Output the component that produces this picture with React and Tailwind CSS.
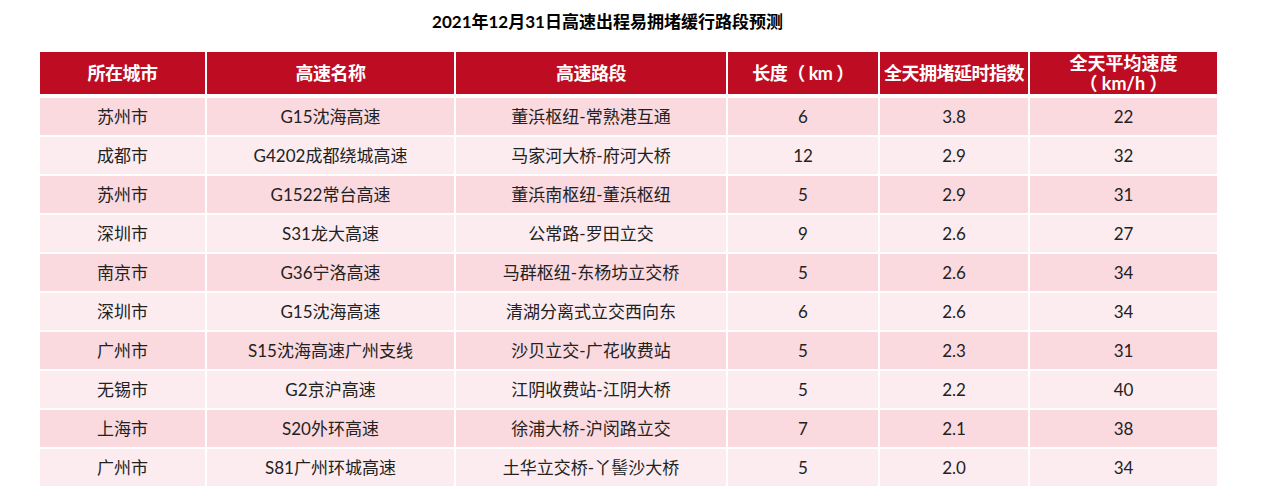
import React from 'react';

const rows = [
  ['苏州市', 'G15沈海高速', '董浜枢纽-常熟港互通', '6', '3.8', '22'],
  ['成都市', 'G4202成都绕城高速', '马家河大桥-府河大桥', '12', '2.9', '32'],
  ['苏州市', 'G1522常台高速', '董浜南枢纽-董浜枢纽', '5', '2.9', '31'],
  ['深圳市', 'S31龙大高速', '公常路-罗田立交', '9', '2.6', '27'],
  ['南京市', 'G36宁洛高速', '马群枢纽-东杨坊立交桥', '5', '2.6', '34'],
  ['深圳市', 'G15沈海高速', '清湖分离式立交西向东', '6', '2.6', '34'],
  ['广州市', 'S15沈海高速广州支线', '沙贝立交-广花收费站', '5', '2.3', '31'],
  ['无锡市', 'G2京沪高速', '江阴收费站-江阴大桥', '5', '2.2', '40'],
  ['上海市', 'S20外环高速', '徐浦大桥-沪闵路立交', '7', '2.1', '38'],
  ['广州市', 'S81广州环城高速', '土华立交桥-丫髻沙大桥', '5', '2.0', '34'],
];

const font = { fontFamily: 'Lato, "Noto Sans CJK SC", sans-serif' };

const App = () => {
  return (
    <div className="w-[1270px] h-[495px] bg-white pt-[12px] pl-[40px]" style={font}>
      <div className="w-[1177px]">
        <div className="flex justify-center pr-[42px] mb-[20px]">
          <h1 className="text-[17px] leading-[20px] font-bold text-black">
            2021年12月31日高速出程易拥堵缓行路段预测
          </h1>
        </div>
        <div className="grid grid-cols-[165px_247px_270px_150px_148px_187px] gap-x-[2px]">
          {['所在城市', '高速名称', '高速路段', '长度（ km ）', '全天拥堵延时指数'].map((h) => (
            <div
              key={h}
              className="h-[42px] bg-[#be0d23] text-white font-bold text-[18px] flex items-center justify-center whitespace-nowrap tracking-[-0.5px]"
            >
              {h}
            </div>
          ))}
          <div className="h-[42px] bg-[#be0d23] text-white font-bold text-[18px] leading-[20px] flex flex-col items-center justify-center whitespace-nowrap overflow-hidden">
            <span>全天平均速度</span>
            <span>（ km/h ）</span>
          </div>
        </div>
        <div className="mt-[4px] flex flex-col gap-y-[2px]">
          {rows.map((r, i) => (
            <div
              key={i}
              className="grid grid-cols-[165px_247px_270px_150px_148px_187px] gap-x-[2px]"
            >
              {r.map((c, j) => (
                <div
                  key={j}
                  className={`h-[37px] flex items-center justify-center text-[17px] text-[#222] ${
                    i % 2 === 0 ? 'bg-[#fad9df]' : 'bg-[#fcecef]'
                  }`}
                >
                  {c}
                </div>
              ))}
            </div>
          ))}
        </div>
      </div>
    </div>
  );
};

export default App;
